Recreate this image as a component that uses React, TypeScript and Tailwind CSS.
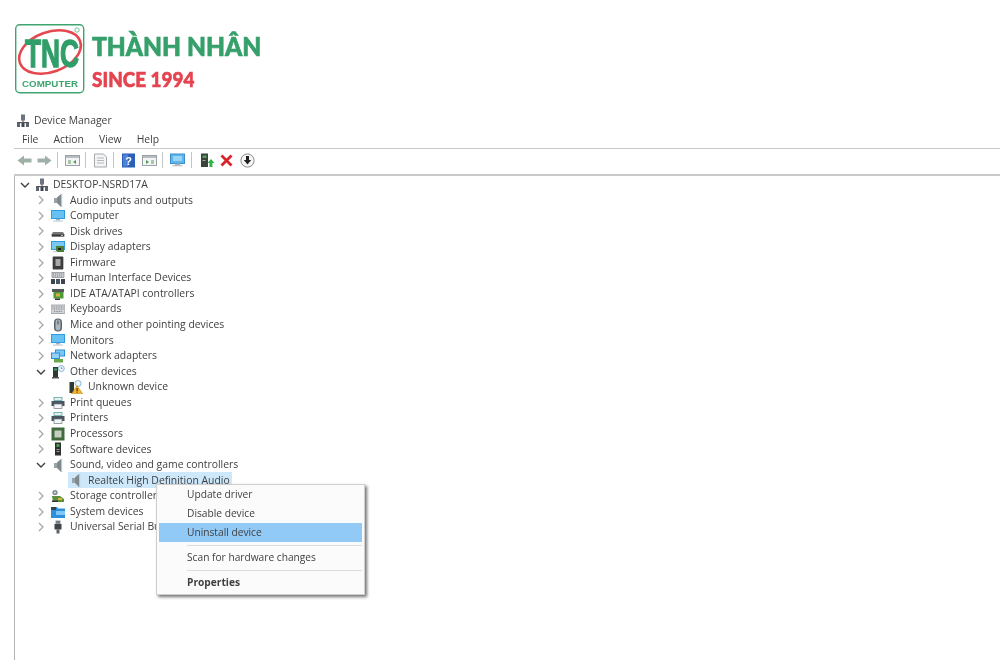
import React from "react";

const S = "'Open Sans','Noto Sans',sans-serif";

function Ico({ n }: { n: string }) {
  const p = { width: 14, height: 14, viewBox: "0 0 14 14", className: "shrink-0" };
  switch (n) {
    case "pc":
      return (<svg {...p}><rect x="5" y="0.5" width="4" height="6" fill="#6b7280" /><rect x="6.5" y="6" width="1" height="3" fill="#555" /><rect x="1" y="8" width="12" height="1.2" fill="#555" /><rect x="1" y="9" width="3" height="4" fill="#5b6470" /><rect x="5.5" y="9" width="3" height="4" fill="#3f4650" /><rect x="10" y="9" width="3" height="4" fill="#5b6470" /></svg>);
    case "audio":
      return (<svg {...p}><rect x="3" y="5" width="3" height="5" fill="#9aa3a8" /><path d="M6 4.5 10 1v13L6 10z" fill="#7f8a8e" /><path d="M10 1h1.2v13H10z" fill="#c4cacc" /></svg>);
    case "monitor":
      return (<svg {...p}><rect x="0" y="1" width="14" height="9" fill="#2f9be0" /><rect x="1" y="2" width="12" height="7" fill="#67c2f3" /><rect x="5" y="10" width="4" height="1.5" fill="#9fb3bf" /><rect x="2" y="11.5" width="10" height="1.2" fill="#c5d0d6" /></svg>);
    case "disk":
      return (<svg {...p}><path d="M2 8h10l1.5 2.5v2H.5v-2z" fill="#777" /><rect x="1" y="10.5" width="12" height="2" fill="#3a3a3a" /><rect x="10" y="11" width="2" height="1" fill="#bbb" /></svg>);
    case "display":
      return (<svg {...p}><rect x="0" y="1" width="14" height="9" fill="#2f9be0" /><rect x="1" y="2" width="12" height="7" fill="#79c8f2" /><rect x="5" y="6" width="8" height="6" fill="#4d7f35" /><rect x="7" y="8" width="3" height="2" fill="#222" /><rect x="2" y="11" width="4" height="1.2" fill="#c5d0d6" /></svg>);
    case "chip":
      return (<svg {...p}><rect x="2" y="0.5" width="10" height="13" fill="#3c3c3c" /><rect x="4.5" y="3" width="5" height="7" fill="#a7a7a7" /><path d="M1 2h1M1 4h1M1 6h1M1 8h1M1 10h1M1 12h1M12 2h1M12 4h1M12 6h1M12 8h1M12 10h1M12 12h1" stroke="#777" /></svg>);
    case "hid":
      return (<svg {...p}><rect x="1" y="1.5" width="12" height="5" fill="#c8ccd0" stroke="#777" strokeWidth="0.6" /><path d="M2 3h10M2 5h10" stroke="#777" strokeDasharray="1 1" strokeWidth="0.8" /><rect x="0" y="8" width="4" height="5" fill="#3b4450" /><rect x="5" y="8" width="4" height="5" fill="#4b5563" /><rect x="10" y="8" width="4" height="5" fill="#3b4450" /></svg>);
    case "ide":
      return (<svg {...p}><rect x="1" y="2" width="12" height="3" fill="#565656" /><rect x="2.5" y="5" width="10" height="6.5" fill="#4d9a3a" /><rect x="5" y="6.5" width="4" height="3" fill="#d7b13c" /><rect x="4" y="11.5" width="5" height="1.5" fill="#333" /></svg>);
    case "kbd":
      return (<svg {...p}><rect x="0" y="3" width="14" height="8.5" fill="#d2d5d8" stroke="#8a8f94" strokeWidth="0.7" /><path d="M1.5 5h11M1.5 7h11M3 9.4h8" stroke="#80858a" strokeDasharray="1 0.7" /></svg>);
    case "mouse":
      return (<svg {...p}><rect x="3" y="0.5" width="8" height="13" rx="3.8" fill="#59636d" /><rect x="4.5" y="1.5" width="5" height="11" rx="2.4" fill="#aeb6bd" /><rect x="6.5" y="2.5" width="1" height="4" fill="#3e464e" /></svg>);
    case "net":
      return (<svg {...p}><rect x="4" y="0.5" width="10" height="7" fill="#2f8fdb" /><rect x="5" y="1.5" width="8" height="5" fill="#7cc7f3" /><rect x="0" y="3.5" width="9" height="6.5" fill="#2f8fdb" /><rect x="1" y="4.5" width="7" height="4.5" fill="#93d2f6" /><rect x="3" y="10" width="9" height="3.5" fill="#6aa84f" /></svg>);
    case "other":
      return (<svg {...p}><rect x="2" y="2" width="5" height="11" fill="#2d3a33" /><rect x="3" y="3.5" width="3" height="2" fill="#4b9b5c" /><rect x="1" y="12" width="7" height="1.5" fill="#555" /><circle cx="10.3" cy="3.5" r="3" fill="#eef6fb" stroke="#6aa7d0" strokeWidth="0.8" /><path d="M10.3 2v1.5h1.2" stroke="#557" strokeWidth="0.6" fill="none" /></svg>);
    case "warn":
      return (<svg {...p}><rect x="0.5" y="2" width="4.5" height="11" fill="#2d3a33" /><circle cx="9" cy="3.5" r="3" fill="#eef6fb" stroke="#6aa7d0" strokeWidth="0.8" /><path d="M8 5.5 13.7 13.8H2.5z" fill="#f3b32a" stroke="#b9801a" strokeWidth="0.5" /><rect x="7.6" y="8" width="1" height="3" fill="#222" /><rect x="7.6" y="11.6" width="1" height="1" fill="#222" /></svg>);
    case "print":
      return (<svg {...p}><rect x="3" y="1.5" width="8" height="3" fill="#e9edf0" stroke="#56a8a0" strokeWidth="0.8" /><path d="M0.5 5h13v5h-2.5V8H3v2H0.5z" fill="#4a5560" /><rect x="3" y="8" width="8" height="4.5" fill="#f3f5f6" stroke="#6e7880" strokeWidth="0.7" /></svg>);
    case "cpu":
      return (<svg {...p}><rect x="0.5" y="0.5" width="13" height="13" fill="#3f6b3a" /><rect x="3.5" y="3.5" width="7" height="7" fill="#c5cfc0" /></svg>);
    case "soft":
      return (<svg {...p}><rect x="4" y="0.5" width="6" height="13" fill="#2e2e2e" /><rect x="5.5" y="2" width="3" height="3" fill="#45a34f" /><rect x="5.5" y="7" width="3" height="1" fill="#999" /><rect x="5.5" y="9" width="3" height="1" fill="#999" /></svg>);
    case "storage":
      return (<svg {...p}><circle cx="4" cy="3.5" r="2.6" fill="#7c8a92" /><circle cx="4" cy="3.5" r="1" fill="#e4e8ea" /><path d="M1 7h8l4 3v3H2z" fill="#5c8f3f" /><rect x="7" y="9" width="4" height="2" fill="#e0b63a" /><rect x="1" y="11.5" width="6" height="1.5" fill="#333" /></svg>);
    case "sys":
      return (<svg {...p}><path d="M0 2h6l1 1.5h7V13H0z" fill="#2f8fdb" /><rect x="0" y="2" width="5" height="3" fill="#345" /><rect x="5" y="6" width="9" height="4" fill="#7cc7f3" /></svg>);
    case "usb":
      return (<svg {...p}><rect x="4.5" y="0.5" width="5" height="4" fill="#8d9499" /><rect x="3.5" y="4" width="7" height="5.5" fill="#3d4348" /><rect x="5.5" y="9.5" width="3" height="4" fill="#5d6368" /><rect x="5.5" y="1.5" width="1" height="1" fill="#333" /><rect x="7.5" y="1.5" width="1" height="1" fill="#333" /></svg>);
  }
  return null;
}

function Chevron({ open }: { open?: boolean }) {
  return open ? (
    <svg width="14" height="14" viewBox="0 0 14 14" className="shrink-0"><path d="M3 5l4 4 4-4" fill="none" stroke="#404040" strokeWidth="1.4" /></svg>
  ) : (
    <svg width="14" height="14" viewBox="0 0 14 14" className="shrink-0"><path d="M5 3l4 4-4 4" fill="none" stroke="#a8a8a8" strokeWidth="1.3" /></svg>
  );
}

function Row({ icon, label, open }: { icon: string; label: string; open?: boolean }) {
  return (
    <div className="flex h-[15.57px] items-center pl-[19px]">
      <Chevron open={open} />
      <span className="ml-[3px]"><Ico n={icon} /></span>
      <span className="ml-[5px] whitespace-nowrap">{label}</span>
    </div>
  );
}

function Child({ icon, label, selected }: { icon: string; label: string; selected?: boolean }) {
  return (
    <div className="flex h-[15.57px] items-center pl-[53px]">
      <div className={selected ? "flex h-[16px] w-[164px] items-center bg-[#cde8fb] pl-[1px]" : "flex h-[16px] items-center pl-[1px]"}>
        <Ico n={icon} />
        <span className="ml-[5px] whitespace-nowrap">{label}</span>
      </div>
    </div>
  );
}

function Sep({ wide }: { wide?: boolean }) {
  return <span className={wide ? "ml-[6px] mr-[8px] h-[16px] w-px bg-[#c4c4c4]" : "ml-[5px] mr-[7px] h-[16px] w-px bg-[#c4c4c4]"} />;
}

function Toolbar() {
  const w = { width: 15, height: 15, viewBox: "0 0 15 15" };
  return (
    <div className="flex h-[27px] items-center border-b-2 border-[#c9c9c9] pb-[3px] pl-[3px]">
      <svg {...w}><path d="M0.5 7.5 7 2.5v3h7.5v4H7v3z" fill="#9fb0a6" /></svg>
      <span className="w-[5px]" />
      <svg {...w}><path d="M14.5 7.5 8 2.5v3H.5v4H8v3z" fill="#9fb0a6" /></svg>
      <Sep />
      <svg {...w}><rect x="0.5" y="2.5" width="14" height="10" fill="#f2f4f5" stroke="#9aa0a5" /><rect x="1" y="3" width="13" height="2" fill="#b8bdc2" /><rect x="3" y="7" width="3" height="4" fill="#a8c8a8" /><path d="M11 7v4L8 9z" fill="#4f9a5b" /></svg>
      <Sep />
      <svg {...w}><path d="M1.5 1h9l3 3v10h-12z" fill="#f4f5f6" stroke="#a4a9ad" /><path d="M4 5h7M4 7.5h7M4 10h7" stroke="#b4b8bc" /></svg>
      <Sep />
      <svg {...w}><rect x="1" y="0.5" width="13" height="14" fill="#2b5fb8" /><rect x="2" y="1.5" width="5" height="12" fill="#4b82d8" /><text x="7.5" y="12" textAnchor="middle" fontSize="11" fontWeight="700" fill="#fff" fontFamily="Liberation Sans">?</text></svg>
      <span className="w-[6px]" />
      <svg {...w}><rect x="0.5" y="2.5" width="14" height="10" fill="#f2f4f5" stroke="#9aa0a5" /><rect x="1" y="3" width="13" height="2" fill="#b8bdc2" /><path d="M4 7v4l3-2z" fill="#4f9a5b" /><rect x="9" y="7" width="3" height="4" fill="#a8c8a8" /></svg>
      <Sep />
      <svg {...w}><rect x="0.5" y="1" width="14" height="9.5" fill="#5fb4ea" stroke="#3b8fcb" /><rect x="3" y="3" width="9" height="5" fill="#9ad5f6" /><rect x="5" y="10.5" width="5" height="1.5" fill="#9fb3bf" /><rect x="2.5" y="12" width="10" height="1.3" fill="#b9c6ce" /></svg>
      <Sep wide />
      <svg {...w}><rect x="1" y="0.5" width="7" height="13.5" fill="#39433c" /><rect x="2.5" y="2.5" width="4" height="2.5" fill="#5a9a64" /><rect x="2.5" y="7" width="3" height="1" fill="#9aa" /><path d="M11 6l3.5 4H12.4v4h-3v-4H7.5z" fill="#2fb34a" /></svg>
      <span className="w-[5px]" />
      <svg width="13" height="13" viewBox="0 0 13 13"><path d="M1.5 1.5l10 10M11.5 1.5l-10 10" stroke="#d8232a" strokeWidth="2.8" /></svg>
      <span className="w-[7px]" />
      <svg {...w}><circle cx="7.5" cy="7.5" r="6.6" fill="#f5f5f5" stroke="#8b8b8b" /><path d="M6 3h3v4h2.2L7.5 11.5 3.8 7H6z" fill="#222" /></svg>
    </div>
  );
}

function Logo() {
  return (
    <div className="flex h-[100px] items-start pl-[15px] pt-[24px]">
      <svg width="70" height="70" viewBox="0 0 70 70" className="shrink-0">
        <rect x="0.7" y="0.7" width="68" height="68" rx="4" fill="#fff" stroke="#3fa56f" strokeWidth="1.4" />
        <ellipse cx="35" cy="28" rx="32" ry="20" fill="none" stroke="#e5484f" strokeWidth="2.6" transform="rotate(-20 35 28)" />
        <text x="37" y="43" textAnchor="middle" fontSize="38" fontWeight="700" fill="#2f9e68" stroke="#2f9e68" strokeWidth="1.3" textLength="54" lengthAdjust="spacingAndGlyphs" fontFamily="Liberation Sans">TNC</text>
        <text x="35" y="63" textAnchor="middle" fontSize="9.6" fontWeight="700" fill="#3fa56f" textLength="56" lengthAdjust="spacingAndGlyphs" fontFamily="Liberation Sans">COMPUTER</text>
        <circle cx="62" cy="6" r="2.2" fill="none" stroke="#3fa56f" strokeWidth="0.7" />
      </svg>
      <div className="ml-[7px] flex flex-col font-['Lato',sans-serif] font-black leading-none">
        <span className="mt-[8px] origin-left scale-x-[0.91] whitespace-nowrap text-[27px] text-[#36a06b] [-webkit-text-stroke:0.7px_#36a06b]">THÀNH NHÂN</span>
        <span className="mt-[9px] origin-left scale-x-[0.9] whitespace-nowrap text-[21px] text-[#e4434f] [-webkit-text-stroke:0.6px_#e4434f]">SINCE 1994</span>
      </div>
    </div>
  );
}

function Menu() {
  const item = "flex h-[19px] items-center pl-[28px]";
  return (
    <div className="absolute left-[156px] top-[484px] h-[111px] w-[209px] border border-[#cfcfcf] bg-[#fbfbfb] px-[2px] text-[10.2px] shadow-[2px_2px_3px_rgba(0,0,0,0.55)]">
      <div className={item}>Update driver</div>
      <div className={item}>Disable device</div>
      <div className={item + " bg-[#91c9f7]"}>Uninstall device</div>
      <div className="ml-[28px] mt-[3px] h-px bg-[#dcdcdc]" />
      <div className={item + " mt-[2px]"}>Scan for hardware changes</div>
      <div className="ml-[28px] mt-[3px] h-px bg-[#dcdcdc]" />
      <div className={item + " mt-[2px] font-bold"}>Properties</div>
    </div>
  );
}

export default function App() {
  return (
    <div style={{ fontFamily: S }} className="relative h-[660px] w-[1000px] overflow-hidden bg-white text-[10.4px] text-[#3f3f3f] blur-[0.35px]">
      <Logo />
      <div className="flex h-[30px] items-center pl-[16px] pt-[11px]">
        <Ico n="pc" />
        <span className="ml-[4px]">Device Manager</span>
      </div>
      <div className="ml-[14px] flex h-[19px] items-center gap-[15px] border-b border-[#c9c9c9] pl-[8px] pt-[1px]">
        <span>File</span><span>Action</span><span>View</span><span>Help</span>
      </div>
      <div className="ml-[14px]"><Toolbar /></div>
      <div className="ml-[14px] h-[500px] border-l border-[#b5b5b5] pt-[1px]">
        <div className="flex h-[15.57px] items-center pl-[3px]">
          <Chevron open />
          <span className="ml-[3px]"><Ico n="pc" /></span>
          <span className="ml-[4px] whitespace-nowrap">DESKTOP-NSRD17A</span>
        </div>
        <Row icon="audio" label="Audio inputs and outputs" />
        <Row icon="monitor" label="Computer" />
        <Row icon="disk" label="Disk drives" />
        <Row icon="display" label="Display adapters" />
        <Row icon="chip" label="Firmware" />
        <Row icon="hid" label="Human Interface Devices" />
        <Row icon="ide" label="IDE ATA/ATAPI controllers" />
        <Row icon="kbd" label="Keyboards" />
        <Row icon="mouse" label="Mice and other pointing devices" />
        <Row icon="monitor" label="Monitors" />
        <Row icon="net" label="Network adapters" />
        <Row icon="other" label="Other devices" open />
        <Child icon="warn" label="Unknown device" />
        <Row icon="print" label="Print queues" />
        <Row icon="print" label="Printers" />
        <Row icon="cpu" label="Processors" />
        <Row icon="soft" label="Software devices" />
        <Row icon="audio" label="Sound, video and game controllers" open />
        <Child icon="audio" label="Realtek High Definition Audio" selected />
        <Row icon="storage" label="Storage controllers" />
        <Row icon="sys" label="System devices" />
        <Row icon="usb" label="Universal Serial Bus controllers" />
      </div>
      <Menu />
    </div>
  );
}
